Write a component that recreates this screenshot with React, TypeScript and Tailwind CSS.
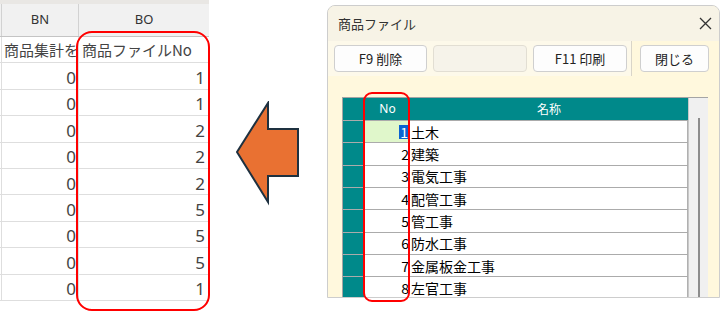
import React from "react";

const sheetRows: [string, string][] = [
  ["0", "1"],
  ["0", "1"],
  ["0", "2"],
  ["0", "2"],
  ["0", "2"],
  ["0", "5"],
  ["0", "5"],
  ["0", "5"],
  ["0", "1"],
];

const gridRows: [string, string][] = [
  ["1", "土木"],
  ["2", "建築"],
  ["3", "電気工事"],
  ["4", "配管工事"],
  ["5", "管工事"],
  ["6", "防水工事"],
  ["7", "金属板金工事"],
  ["8", "左官工事"],
];

const jp = { fontFamily: '"Noto Sans CJK JP", "Noto Sans", sans-serif' };
const ui = { fontFamily: '"Noto Sans", "Noto Sans CJK JP", sans-serif' };

function Sheet() {
  return (
    <div className="w-[209px] shrink-0 h-[312px] bg-white" style={jp}>
      <div className="h-[4px] bg-[#e9e7e4]" />
      <div className="h-[33px] flex bg-[#f1f1f1] border-b border-[#c4c4c4] pl-[1px]" style={ui}>
        <div className="w-[78px] border-l border-r border-[#d2d2d2] flex items-center justify-center text-[13px] text-[#333]">
          BN
        </div>
        <div className="flex-1 flex items-center justify-center text-[13px] text-[#333]">BO</div>
      </div>
      <div className="h-[26.4px] flex border-b border-[#dedede] pl-[1px] text-[15px] text-[#444]">
        <div className="w-[78px] border-l border-r border-[#dedede] overflow-hidden whitespace-nowrap flex items-center pl-[2px] leading-none">
          商品集計を
        </div>
        <div className="flex-1 flex items-center pl-[3px] whitespace-nowrap leading-none overflow-hidden">
          商品ファイルNo
        </div>
      </div>
      {sheetRows.map(([a, b], i) => (
        <div key={i} className="h-[26.4px] flex border-b border-[#dedede] pl-[1px] text-[17px] text-[#444]" style={ui}>
          <div className="w-[78px] border-l border-r border-[#dedede] flex items-center justify-end pr-[2px] pt-[3px] leading-none">
            {a}
          </div>
          <div className="flex-1 flex items-center justify-end pr-[4px] pt-[3px] leading-none">{b}</div>
        </div>
      ))}
    </div>
  );
}

function Arrow() {
  return (
    <div className="w-[118px] shrink-0 pl-[26px] pt-[101px]">
      <svg width="68" height="106" viewBox="0 0 68 106">
        <polygon
          points="2,51 33,2 33,28 63,28 63,75 33,75 33,101"
          fill="#e97132"
          stroke="#1e3140"
          strokeWidth="2"
          strokeLinejoin="miter"
        />
      </svg>
    </div>
  );
}

function Btn({ label, w, disabled }: { label: string; w: string; disabled?: boolean }) {
  return (
    <div
      className={`${w} h-[27px] rounded-[4px] border flex items-center justify-center text-[13px] text-[#222] ${
        disabled ? "bg-[#f6f3ea] border-[#e2ded3]" : "bg-[#fdfdfd] border-[#cfcfcf]"
      }`}
    >
      {label}
    </div>
  );
}

function Dialog() {
  return (
    <div
      className="w-[393px] shrink-0 mt-[5px] h-[293px] border border-[#cdcdcd] rounded-t-[8px] overflow-hidden bg-[#fff8dd] flex flex-col"
      style={jp}
    >
      <div className="h-[35px] shrink-0 bg-[#f7f3e6] flex items-center justify-between pl-[10px] pr-[7px]">
        <span className="text-[13px] text-[#333]">商品ファイル</span>
        <svg width="13" height="13" viewBox="0 0 13 13">
          <path d="M1 1 L12 12 M12 1 L1 12" stroke="#333" strokeWidth="1.3" />
        </svg>
      </div>
      <div className="flex items-start shrink-0">
        <div className="w-[304px] h-[35px] border-r border-[#d9d5c9] bg-[#fdf9ea] flex items-start gap-[6px] pl-[6px] pt-[4px]">
          <Btn label="F9 削除" w="w-[93px]" />
          <Btn label="" w="w-[94px]" disabled />
          <Btn label="F11 印刷" w="w-[94px]" />
        </div>
        <div className="ml-[8px] mt-[4px]">
          <Btn label="閉じる" w="w-[69px]" />
        </div>
      </div>
      <div className="ml-[14px] mt-[21px] w-[366px] flex-1 flex border-t border-l border-[#a4a4a4]">
        <div className="w-[346px] flex flex-col bg-white">
          <div className="h-[22px] shrink-0 flex bg-[#00898a] text-white text-[12px]">
            <div className="w-[22px]" />
            <div className="w-[45px] flex items-center justify-center" style={ui}>
              No
            </div>
            <div className="flex-1 flex items-center justify-center">名称</div>
          </div>
          {gridRows.map(([n, name], i) => (
            <div key={i} className="h-[22.33px] shrink-0 flex border-t border-[#ababab] text-[14px] text-black">
              <div className="w-[22px] bg-[#00898a] border-r border-[#8fa9a8]" />
              <div
                className={`w-[45px] flex items-center justify-end pr-[1px] leading-none ${
                  i === 0 ? "bg-[#e0f7cb]" : "bg-white"
                }`}
              >
                <span className={i === 0 ? "bg-[#0b63d1] text-white px-[1px]" : ""}>{n}</span>
              </div>
              <div className="flex-1 bg-white flex items-center pl-[1px] leading-none border-r border-[#b0b0b0]">
                {name}
              </div>
            </div>
          ))}
          <div className="flex-1 flex border-t border-[#ababab]">
            <div className="w-[22px] bg-[#00898a] border-r border-[#8fa9a8]" />
            <div className="flex-1 border-r border-[#b0b0b0]" />
          </div>
        </div>
        <div className="w-[20px] bg-[#f0f0f0] border-l border-[#c8c8c8] flex justify-center pt-[20px]">
          <div className="w-[2px] h-full bg-[#8c8c8c]" />
        </div>
      </div>
    </div>
  );
}

export default function App() {
  return (
    <div className="relative w-[725px] h-[312px] bg-white flex items-start overflow-hidden">
      <Sheet />
      <Arrow />
      <Dialog />
      <div className="absolute left-[76px] top-[31px] w-[134px] h-[280px] border-2 border-[#ff0000] rounded-[16px]" />
      <div className="absolute left-[363px] top-[92px] w-[47px] h-[210px] border-2 border-[#ff0000] rounded-[9px]" />
    </div>
  );
}
